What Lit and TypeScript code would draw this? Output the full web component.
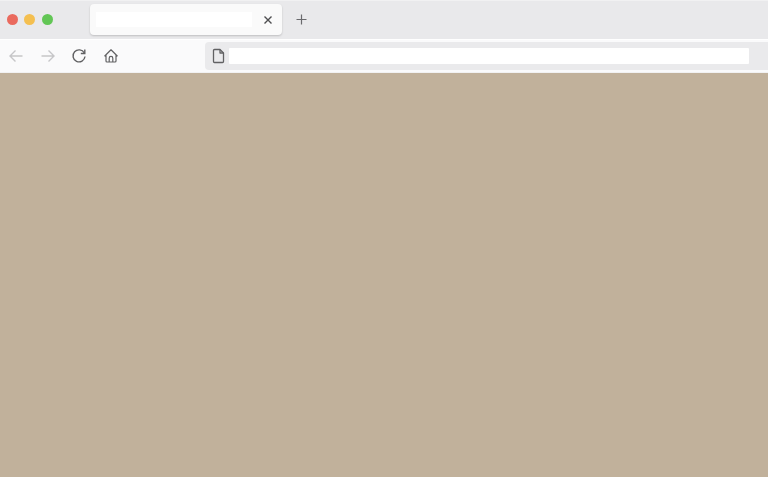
import { LitElement, html, css } from "lit";
import { customElement } from "lit/decorators.js";

@customElement("app-root")
export class AppRoot extends LitElement {
  static styles = css`
    :host { display: flex; flex-direction: column; width: 768px; height: 477px; background: #c1b19b; overflow: hidden; font-family: "Liberation Sans", sans-serif; }
    .tabbar { height: 39px; flex: none; box-sizing: border-box; background: #e9e9eb; display: flex; align-items: flex-start; border-top: 1px solid #f1f1f2; }
    .lights { display: flex; gap: 6.5px; padding: 12.500px 0 0 6.500px; width: 90px; flex: none; box-sizing: border-box; }
    .light { width: 11px; height: 11px; border-radius: 50%; }
    .red { background: #ea6a5e; } .yellow { background: #f4bf50; } .green { background: #62c655; }
    .tab { width: 192px; height: 31px; margin-top: 3px; flex: none; box-sizing: border-box; background: #fafafa; border-radius: 4px; box-shadow: 0 1px 2px rgba(0,0,0,.18); display: flex; align-items: center; padding: 0 8px 0 6px; }
    .title { width: 156px; height: 15px; background: #fff; }
    .close { margin-left: auto; display: flex; }
    .plus { margin: 11px 0 0 12px; display: flex; }
    .toolbar { height: 34px; flex: none; box-sizing: border-box; background: #fafafb; display: flex; align-items: center; border-top: 1px solid #fff; border-bottom: 1px solid #f1f1f2; }
    .nav { display: flex; gap: 11.500px; padding-left: 6px; width: 205px; flex: none; box-sizing: border-box; }
    .nav svg { display: block; width: 20px; height: 20px; }
    .address { flex: 1; height: 28px; background: #eaeaec; border-radius: 4px 0 0 4px; display: flex; align-items: center; padding: 0 19px 0 7px; gap: 3px; }
    .address svg { flex: none; }
    .url { flex: 1; height: 16px; background: #fff; border-radius: 1px; }
    .page { flex: 1; background: #c1b19b; }
  `;

  render() {
    return html`
      <div class="tabbar">
        <div class="lights"><span class="light red"></span><span class="light yellow"></span><span class="light green"></span></div>
        <div class="tab">
          <div class="title"></div>
          <span class="close"><svg width="12" height="12" viewBox="0 0 12 12" fill="none" stroke="#4e4e50" stroke-width="1.4"><path d="M2.500 2.500l7 7M9.500 2.500l-7 7"/></svg></span>
        </div>
        <span class="plus"><svg width="15" height="15" viewBox="0 0 15 15" fill="none" stroke="#6a6a6d" stroke-width="1.200"><path d="M7.500 2.500v10M2.500 7.500h10"/></svg></span>
      </div>
      <div class="toolbar">
        <div class="nav">
          <svg viewBox="0 0 20 20" fill="none" stroke="#c6c6c8" stroke-width="1.400"><path d="M16.500 10H4M9.500 4.500L4 10l5.500 5.500"/></svg>
          <svg viewBox="0 0 20 20" fill="none" stroke="#c6c6c8" stroke-width="1.400"><path d="M3.500 10H16M10.500 4.500L16 10l-5.500 5.500"/></svg>
          <svg viewBox="0 0 20 20" fill="none" stroke="#616163" stroke-width="1.400"><path d="M15.300 7A6 6 0 1 0 16 10.500"/><path d="M15.800 3.500v4h-4" /></svg>
          <svg viewBox="0 0 20 20" fill="none" stroke="#616163" stroke-width="1.200" stroke-linejoin="round"><path d="M3.500 10.200L10 3.800l6.500 6.400M5 8.800v6.200a1 1 0 0 0 1 1h8a1 1 0 0 0 1-1V8.800M8.200 16v-3.800a1.800 1.800 0 0 1 3.600 0V16"/></svg>
        </div>
        <div class="address">
          <svg width="14" height="16" viewBox="0 0 14 16" fill="none" stroke="#616163" stroke-width="1.300" stroke-linejoin="round"><path d="M2.500 1.500h5.500l3.500 3.500v8.500a1 1 0 0 1-1 1h-8a1 1 0 0 1-1-1v-11a1 1 0 0 1 1-1z"/><path d="M8 1.500V5h3.500" /></svg>
          <div class="url"></div>
        </div>
      </div>
      <div class="page"></div>
    `;
  }
}
